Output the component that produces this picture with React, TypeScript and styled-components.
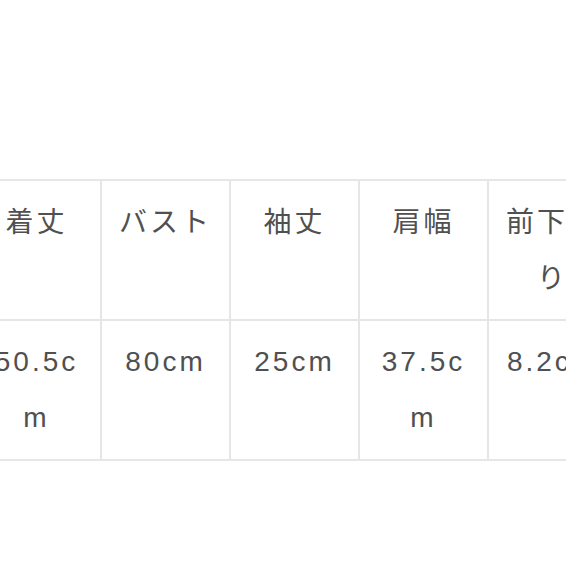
import React from "react";
import styled, { createGlobalStyle } from "styled-components";

const Global = createGlobalStyle`
  html, body { margin: 0; padding: 0; background: #ffffff; }
  body { font-family: "Liberation Sans", "Noto Sans CJK JP", sans-serif; }
`;

const Page = styled.div`
  width: 566px;
  height: 566px;
  overflow: hidden;
  padding-top: 179px;
  box-sizing: border-box;
  background: #ffffff;
`;

const Table = styled.table`
  margin-left: -29px;
  border-collapse: collapse;
  table-layout: fixed;
  width: 645px;
`;

const Cell = styled.td<{ $head?: boolean }>`
  width: 129px;
  box-sizing: border-box;
  border: 2px solid #e6e6e6;
  padding: ${(p) => (p.$head ? "11px 13px 15px" : "13px 13px")};
  vertical-align: top;
  text-align: center;
  color: #505050;
  font-size: 28px;
  line-height: 56px;
  height: 140px;
  letter-spacing: 3px;
  word-break: break-all;
  font-family: ${(p) =>
    p.$head
      ? `"Noto Sans CJK JP", sans-serif`
      : `"Liberation Sans", "Noto Sans CJK JP", sans-serif`};
`;

const heads = ["着丈", "バスト", "袖丈", "肩幅", "前下がり"];
const values = ["50.5cm", "80cm", "25cm", "37.5cm", "8.2cm"];

export default function App() {
  return (
    <Page>
      <Global />
      <Table>
        <tbody>
          <tr>
            {heads.map((h) => (
              <Cell key={h} $head>
                {h}
              </Cell>
            ))}
          </tr>
          <tr>
            {values.map((v) => (
              <Cell key={v}>{v}</Cell>
            ))}
          </tr>
        </tbody>
      </Table>
    </Page>
  );
}
